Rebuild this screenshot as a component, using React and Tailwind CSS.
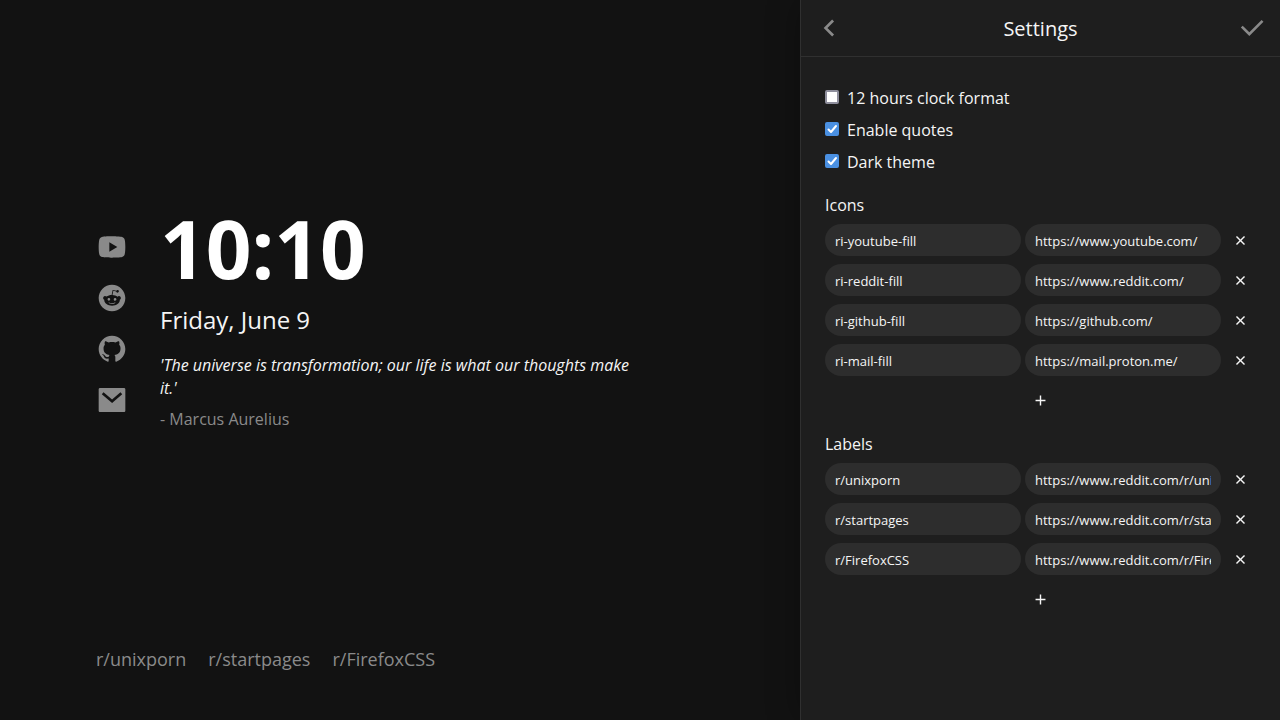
import { useState } from "react";
import {
  RiYoutubeFill,
  RiRedditFill,
  RiGithubFill,
  RiMailFill,
  RiArrowLeftSLine,
  RiCheckLine,
  RiCloseLine,
  RiAddLine,
} from "react-icons/ri";

const ICONS = {
  "ri-youtube-fill": RiYoutubeFill,
  "ri-reddit-fill": RiRedditFill,
  "ri-github-fill": RiGithubFill,
  "ri-mail-fill": RiMailFill,
};

const initialIcons = [
  { name: "ri-youtube-fill", url: "https://www.youtube.com/" },
  { name: "ri-reddit-fill", url: "https://www.reddit.com/" },
  { name: "ri-github-fill", url: "https://github.com/" },
  { name: "ri-mail-fill", url: "https://mail.proton.me/" },
];

const initialLabels = [
  { name: "r/unixporn", url: "https://www.reddit.com/r/unixporn/" },
  { name: "r/startpages", url: "https://www.reddit.com/r/startpages/" },
  { name: "r/FirefoxCSS", url: "https://www.reddit.com/r/FirefoxCSS/" },
];

function Toggle({ label, defaultChecked }) {
  return (
    <label className="flex h-8 items-center gap-2">
      <span className="relative flex pb-0.5">
        <input
          type="checkbox"
          defaultChecked={defaultChecked}
          className="peer size-3.5 appearance-none rounded-xs border-2 border-[#8f8f9d] bg-white checked:border-[#4a90e2] checked:bg-[#4a90e2]"
        />
        <svg
          viewBox="0 0 14 14"
          className="pointer-events-none absolute top-0 left-0 hidden size-3.5 peer-checked:block"
          fill="none"
          stroke="#fff"
          strokeWidth="2"
          strokeLinecap="round"
          strokeLinejoin="round"
          aria-hidden="true"
        >
          <path d="M3.5 7.5 6 10l5-6" />
        </svg>
      </span>
      {label}
    </label>
  );
}

function Field({ label, value, onChange }) {
  return (
    <input
      type="text"
      aria-label={label}
      value={value}
      onChange={(e) => onChange(e.target.value)}
      className="h-8 w-0 min-w-0 flex-1 rounded-full bg-[#2d2d2d] px-2.5 pt-0.5 text-[13px] outline-none"
    />
  );
}

function LinkEditor({ title, items, setItems }) {
  const update = (i, key, value) =>
    setItems(items.map((it, n) => (n === i ? { ...it, [key]: value } : it)));
  return (
    <section className="pb-px">
      <h2 className="mb-2 leading-[22px]">{title}</h2>
      <ul className="flex flex-col gap-2">
        {items.map((it, i) => (
          <li key={i} className="flex gap-1">
            <Field label={title + " name"} value={it.name} onChange={(v) => update(i, "name", v)} />
            <Field label={title + " address"} value={it.url} onChange={(v) => update(i, "url", v)} />
            <button
              type="button"
              aria-label="Remove"
              onClick={() => setItems(items.filter((_, n) => n !== i))}
              className="flex h-8 w-[30px] items-center justify-center"
            >
              <RiCloseLine size={17} />
            </button>
          </li>
        ))}
      </ul>
      <button
        type="button"
        aria-label="Add"
        onClick={() => setItems([...items, { name: "", url: "" }])}
        className="mt-2 flex h-8 w-full items-center justify-center"
      >
        <RiAddLine size={17} />
      </button>
    </section>
  );
}

export default function App() {
  const [icons, setIcons] = useState(initialIcons);
  const [labels, setLabels] = useState(initialLabels);

  return (
    <div className="flex min-h-screen bg-[#121212] font-['Open_Sans','Noto_Sans',sans-serif] text-[#f5f5f5]">
      <main className="flex flex-1 flex-col px-24 pb-12">
        <div className="flex flex-1 items-center gap-8">
          <nav aria-label="Sites" className="flex flex-col gap-[19px] text-[#8a8a8a]">
            {icons.map((it, i) => {
              const Icon = ICONS[it.name];
              return (
                <a key={i} href={it.url} aria-label={it.name}>
                  {Icon && <Icon size={32} />}
                </a>
              );
            })}
          </nav>
          <div className="max-w-[480px] pb-[7px]">
            <h1 className="text-[80px] leading-20 font-bold text-white">10:10</h1>
            <p className="mt-4 text-2xl leading-8">Friday, June 9</p>
            <p className="mt-[18px] leading-[23px] italic">
              'The universe is transformation; our life is what our thoughts make it.'
            </p>
            <p className="mt-[7px] leading-6 text-[#8a8a8a]">- Marcus Aurelius</p>
          </div>
        </div>
        <footer className="flex gap-[22px] text-lg leading-[26px] text-[#8a8a8a]">
          {labels.map((it, i) => (
            <a key={i} href={it.url}>
              {it.name}
            </a>
          ))}
        </footer>
      </main>

      <aside className="w-3/8 border-l border-[#303030] bg-[#1e1e1e] shadow-[0_0_32px_rgba(0,0,0,0.3)]">
        <header className="flex h-[57px] items-center justify-between border-b border-[#303030] px-3">
          <button type="button" aria-label="Back" className="text-[#8a8a8a]">
            <RiArrowLeftSLine size={32} />
          </button>
          <h2 className="pt-0.5 text-xl">Settings</h2>
          <button type="button" aria-label="Save" className="text-[#8a8a8a]">
            <RiCheckLine size={32} />
          </button>
        </header>
        <form
          className="flex flex-col gap-4 py-[25px] pr-[25px] pl-6"
          onSubmit={(e) => e.preventDefault()}
        >
          <div className="flex flex-col">
            <Toggle label="12 hours clock format" />
            <Toggle label="Enable quotes" defaultChecked />
            <Toggle label="Dark theme" defaultChecked />
          </div>
          <LinkEditor title="Icons" items={icons} setItems={setIcons} />
          <LinkEditor title="Labels" items={labels} setItems={setLabels} />
        </form>
      </aside>
    </div>
  );
}
